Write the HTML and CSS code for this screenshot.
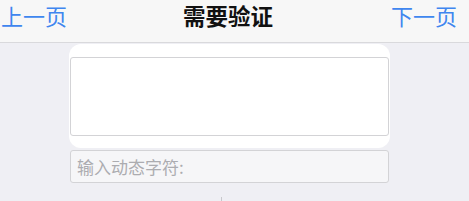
FILE: index.html
```html
<html lang="zh-CN">
	<head>
		<meta charset="UTF-8" />
		<meta name="viewport" content="width=device-width, initial-scale=1.0" />
		<title>需要验证</title>
		<link rel="stylesheet" href="styles.css">
	</head>

	<body>
		<div class="nav-bar">
			<a class="nav-link">上一页</a>
			<h1 class="nav-title">需要验证</h1>
			<a class="nav-link next">下一页</a>
		</div>

		<div class="content">
			<div class="captcha-card">
				<div class="captcha-box"></div>
			</div>
			<input type="text" class="code-input" placeholder="输入动态字符:" />
			<div class="divider"></div>
		</div>
	</body>
</html>
```

FILE: styles.css
```css
body {
	font-family: 'Noto Sans CJK SC', 'Noto Sans', sans-serif;
	margin: 0;
	padding: 0;
	background: #efeff4;
	height: 100vh;
	overflow: hidden;
}

.nav-bar {
	display: flex;
	align-items: center;
	justify-content: space-between;
	height: 42px;
	padding: 0 12px 0 1px;
	background: #f7f7f7;
	border-bottom: 1px solid #d9d9dc;
}

.nav-link {
	font-size: 22px;
	color: #3f86ef;
	line-height: 1;
	margin-top: -12px;
	width: 80px;
}

.nav-link.next {
	text-align: right;
}

.nav-title {
	margin: -12px 0 0 -2px;
	font-size: 22.5px;
	font-weight: bold;
	color: #111;
	line-height: 1;
}

.content {
	display: flex;
	flex-direction: column;
	padding-left: 69px;
}

.captcha-card {
	width: 319px;
	margin-top: 1px;
	padding: 13px 1px 12px;
	background: #fff;
	border-radius: 12px;
}

.captcha-box {
	height: 77px;
	border: 1px solid #d3d3d6;
	border-radius: 3px;
	background: #fff;
}

.code-input {
	width: 319px;
	height: 33px;
	margin: 2px 0 0 1px;
	padding: 0 6px;
	box-sizing: border-box;
	border: 1px solid #d3d3d6;
	border-radius: 3px;
	background: #f6f6f8;
	font-family: inherit;
	font-size: 17px;
	color: #333;
	outline: none;
}

.code-input::placeholder {
	color: #acacb0;
}

.divider {
	width: 1px;
	height: 6px;
	margin: 14px 0 0 152px;
	background: #c8c8cc;
}
```
